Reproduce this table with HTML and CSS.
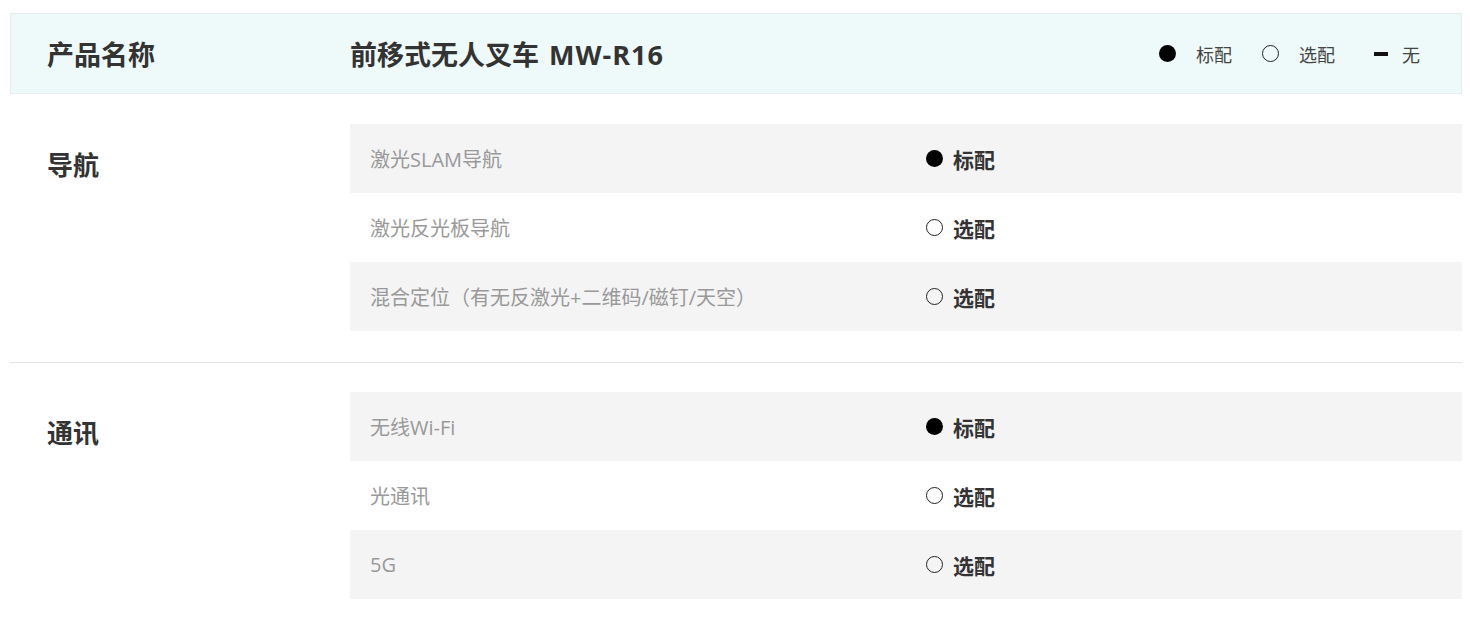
FILE: index.html
```html
<!DOCTYPE html>
<html lang="zh-CN">
<head>
<meta charset="utf-8">
<title>前移式无人叉车 MW-R16</title>
<link rel="stylesheet" href="styles.css">
</head>
<body>
<div class="spec">
  <div class="head">
    <div class="head-label">产品名称</div>
    <div class="head-title">前移式无人叉车 <span class="model">MW-R16</span></div>
    <div class="legend">
      <span class="dot full"></span><span class="legend-text">标配</span>
      <span class="dot open"></span><span class="legend-text">选配</span>
      <span class="dash"></span><span class="legend-text">无</span>
    </div>
  </div>

  <div class="section">
    <div class="sec-label">导航</div>
    <div class="rows">
      <div class="row"><div class="name">激光SLAM导航</div><div class="val"><span class="dot full"></span>标配</div></div>
      <div class="row"><div class="name">激光反光板导航</div><div class="val"><span class="dot open"></span>选配</div></div>
      <div class="row"><div class="name">混合定位（有无反激光+二维码/磁钉/天空）</div><div class="val"><span class="dot open"></span>选配</div></div>
    </div>
  </div>

  <div class="section">
    <div class="sec-label">通讯</div>
    <div class="rows">
      <div class="row"><div class="name">无线Wi-Fi</div><div class="val"><span class="dot full"></span>标配</div></div>
      <div class="row"><div class="name">光通讯</div><div class="val"><span class="dot open"></span>选配</div></div>
      <div class="row"><div class="name">5G</div><div class="val"><span class="dot open"></span>选配</div></div>
    </div>
  </div>
</div>
</body>
</html>
```

FILE: styles.css
```css
html, body {
  margin: 0;
  padding: 0;
  background: #fff;
}
body {
  font-family: "Open Sans", "Noto Sans CJK SC", sans-serif;
  color: #333;
}
.spec {
  margin: 13px 8px 0 10px;
}
.head {
  display: flex;
  align-items: center;
  height: 79px;
  margin-bottom: 1px;
  background: #eefafa;
  border: 1px solid #e6ecec;
}
.head-label {
  width: 303px;
  padding-left: 36px;
  font-size: 27px;
  font-weight: 700;
  color: #333;
}
.head-title {
  flex: 1;
  font-size: 27px;
  font-weight: 700;
  color: #333;
}
.model {
  letter-spacing: 1px;
  margin-left: 3px;
}
.legend {
  display: flex;
  align-items: center;
  padding-right: 41px;
  font-size: 18px;
  color: #444;
}
.legend .dot { margin-right: 20px; }
.legend-text { margin-right: 30px; }
.legend-text:last-child { margin-right: 0; }
.legend .dash { margin-left: 9px; margin-right: 14px; }
.dot {
  display: inline-block;
  width: 17px;
  height: 17px;
  border-radius: 50%;
  box-sizing: border-box;
  flex: none;
}
.dot.full { background: #000; }
.dot.open { border: 1px solid #222; background: transparent; }
.dash {
  display: inline-block;
  width: 14px;
  height: 4px;
  background: #111;
}
.section {
  display: flex;
  padding: 29px 0 31px;
  border-bottom: 1px solid #e2e2e2;
}
.section:last-child { border-bottom: none; }
.sec-label {
  width: 303px;
  padding-left: 37px;
  padding-top: 22px;
  font-size: 26px;
  font-weight: 700;
  line-height: 38px;
  color: #333;
}
.rows {
  flex: 1;
}
.row {
  display: flex;
  align-items: center;
  height: 69px;
}
.row:nth-child(odd) { background: #f4f4f4; }
.name {
  width: 556px;
  padding-left: 20px;
  font-size: 20px;
  color: #999;
}
.val {
  display: flex;
  align-items: center;
  font-size: 21px;
  font-weight: 700;
  color: #333;
}
.val .dot { margin-right: 10px; }
```
